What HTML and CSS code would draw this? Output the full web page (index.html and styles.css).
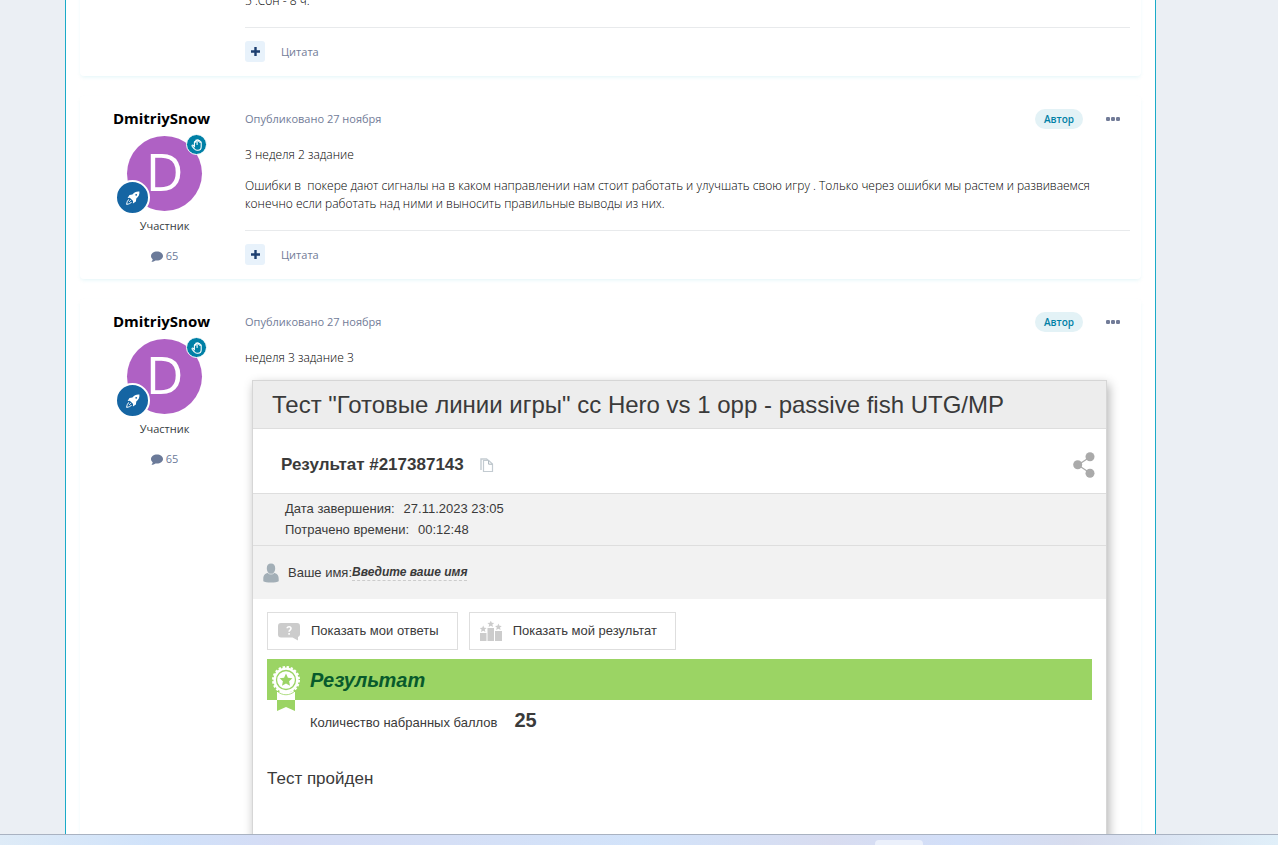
FILE: index.html
```html
<!DOCTYPE html>
<html lang="ru">
<head>
<meta charset="utf-8">
<title>Дневник</title>
<link rel="stylesheet" href="styles.css">
</head>
<body>
<svg class="sprite" aria-hidden="true">
  <symbol id="plus" viewBox="0 0 9 9"><path d="M3.3 0h2.4v3.3H9v2.4H5.7V9H3.3V5.7H0V3.3h3.3z" fill="currentColor"/></symbol>
  <symbol id="comment" viewBox="0 0 12 11"><path d="M6 .5c3.300 0 6 2 6 4.500s-2.700 4.500-6 4.500c-.5 0-1 0-1.500-.1C3.300 10.300 2 10.600.9 10.700c-.3 0-.4-.3-.2-.5.5-.5.9-1.100 1-2C.600 7.400 0 6.200 0 5 0 2.500 2.700.5 6 .5z" fill="currentColor"/></symbol>
  <symbol id="hand" viewBox="0 0 12 12"><path d="M3.400 7.800V3.200c0-1 1.300-1 1.300 0V1.900c0-1 1.400-1 1.400 0v-.4c0-1 1.400-1 1.400 0v.7c0-1 1.400-1 1.400 0v1.300c0-.9 1.300-.9 1.300.1v4.200c0 2-1.200 3.500-3.200 3.500H6c-1.200 0-2-.5-2.700-1.500L1.200 7.300c-.6-.9.400-1.700 1.200-1zM6.100 2v3.400" fill="none" stroke="#fff" stroke-width="1.100" stroke-linecap="round" stroke-linejoin="round"/></symbol>
  <symbol id="rocket" viewBox="0 0 14 14"><path d="M13.400.6c-3-.3-5.200.7-7 3L3.500 4 1.600 7l2.200-.2 3.300 3.300-.2 2.300 3-1.900.4-2.900c2.400-1.800 3.400-4 3.100-7z" fill="#fff"/><circle cx="10.200" cy="3.800" r=".9" fill="#1565a3"/><path d="M3 8.500C1.500 9.200 1 11 .6 13.400c2.400-.4 4.200-1 4.900-2.400M3.200 10.800l1.500-1.600" fill="none" stroke="#fff"/></symbol>
  <symbol id="dots" viewBox="0 0 14 4"><g fill="currentColor"><rect width="4" height="4" rx="1.200"/><rect x="5" width="4" height="4" rx="1.200"/><rect x="10" width="4" height="4" rx="1.200"/></g></symbol>
</svg>

<main class="viewport">
  <div class="page">
    <div class="feed">
      <article class="post">
        <div class="post-body">
          <div class="post-text"><p>5 .Сон - 8 ч.</p></div>
          <div class="post-controls">
            <button class="quote-add" aria-label="Мультицитата"><svg class="icon-plus"><use href="#plus"/></svg></button>
            <a class="quote" href="#">Цитата</a>
          </div>
        </div>
      </article>

      <article class="post">
        <aside class="author">
          <h3 class="author-name"><a href="#">DmitriySnow</a></h3>
          <div class="avatar"><span class="avatar-letter">D</span>
            <span class="badge-hand"><svg class="icon-hand"><use href="#hand"/></svg></span>
            <span class="badge-rank"><svg class="icon-rocket"><use href="#rocket"/></svg></span>
          </div>
          <p class="author-group">Участник</p>
          <a class="author-posts" href="#"><svg class="icon-comment"><use href="#comment"/></svg>65</a>
        </aside>
        <div class="post-body">
          <header class="post-head">
            <a class="post-date" href="#">Опубликовано 27 ноября</a>
            <span class="tag">Автор</span>
            <button class="more" aria-label="Ещё"><svg class="icon-dots"><use href="#dots"/></svg></button>
          </header>
          <div class="post-text">
            <p>3 неделя 2 задание</p>
            <p>Ошибки в&nbsp; покере дают сигналы на в каком направлении нам стоит работать и улучшать свою игру . Только через ошибки мы растем и развиваемся конечно если работать над ними и выносить правильные выводы из них.</p>
          </div>
          <div class="post-controls">
            <button class="quote-add" aria-label="Мультицитата"><svg class="icon-plus"><use href="#plus"/></svg></button>
            <a class="quote" href="#">Цитата</a>
          </div>
        </div>
      </article>

      <article class="post">
        <aside class="author">
          <h3 class="author-name"><a href="#">DmitriySnow</a></h3>
          <div class="avatar"><span class="avatar-letter">D</span>
            <span class="badge-hand"><svg class="icon-hand"><use href="#hand"/></svg></span>
            <span class="badge-rank"><svg class="icon-rocket"><use href="#rocket"/></svg></span>
          </div>
          <p class="author-group">Участник</p>
          <a class="author-posts" href="#"><svg class="icon-comment"><use href="#comment"/></svg>65</a>
        </aside>
        <div class="post-body">
          <header class="post-head">
            <a class="post-date" href="#">Опубликовано 27 ноября</a>
            <span class="tag">Автор</span>
            <button class="more" aria-label="Ещё"><svg class="icon-dots"><use href="#dots"/></svg></button>
          </header>
          <div class="post-text"><p>неделя 3 задание 3</p></div>
          <section class="quiz">
            <h2 class="quiz-title">Тест "Готовые линии игры" сс Hero vs 1 opp - passive fish UTG/MP</h2>
            <div class="quiz-result">
              <h3 class="quiz-number">Результат #217387143</h3>
              <button class="plain" aria-label="Копировать"><svg class="icon-copy" viewBox="0 0 14 15"><path d="M1 12V1h5.500l2 1.600" fill="none" stroke="#c3cbd1" stroke-width="1.400"/><path d="M3.500 2.500h5.300L12.500 6v7.500h-9z" fill="#fff" stroke="#c3cbd1" stroke-width="1.200"/><path d="M8.600 2.700v3.500h3.700" fill="none" stroke="#a9b4bb"/></svg></button>
              <button class="plain share" aria-label="Поделиться"><svg class="icon-share" viewBox="0 0 22 26"><path d="M17 5 5 13l12 8" fill="none" stroke="#aaa" stroke-width="1.200"/><g fill="#aaa"><circle cx="17" cy="4.800" r="4.500"/><circle cx="4.700" cy="12.800" r="4.500"/><circle cx="17" cy="21.200" r="4.500"/></g></svg></button>
            </div>
            <dl class="quiz-meta">
              <div class="meta-row"><dt>Дата завершения:</dt><dd>27.11.2023 23:05</dd></div>
              <div class="meta-row"><dt>Потрачено времени:</dt><dd>00:12:48</dd></div>
            </dl>
            <div class="quiz-user">
              <svg class="icon-user" viewBox="0 0 16 20"><path d="M8 .5c2.800 0 4.200 2 4.200 4.700 0 2-.7 3.500-1.700 4.600 3.700.6 5.200 2.400 5.200 6v2.400c-2 1.800-13.400 1.800-15.400 0v-2.400c0-3.600 1.500-5.400 5.200-6-1-1.100-1.700-2.600-1.700-4.600C3.800 2.500 5.200.5 8 .5z" fill="#a3afb7"/><path d="M4.800 10c2 1.500 4.400 1.500 6.400 0" fill="none" stroke="#dfe3e5" stroke-width=".8"/></svg>
              <span>Ваше имя:</span><a class="user-edit" href="#">Введите ваше имя</a>
            </div>
            <div class="quiz-main">
              <div class="quiz-actions">
                <button class="quiz-button"><svg class="icon-answers" viewBox="0 0 22 19"><path d="M3 1h16a3 3 0 0 1 3 3v8a3 3 0 0 1-2 3v3.500L14.500 15.500H3a3 3 0 0 1-3-3V4a3 3 0 0 1 3-3z" fill="#ccc"/><path d="M9.200 6.300c0-2.200 3.800-2 3.800.2 0 1.600-1.900 1.500-1.900 3.200M11.100 11v1.700" fill="none" stroke="#fff" stroke-width="1.600"/></svg>Показать мои ответы</button>
                <button class="quiz-button"><svg class="icon-podium" viewBox="0 0 22 20"><g fill="#ccc"><path d="M0 12h6.500v8H0zM7.500 7h6.500v13H7.500zM15 10h7v10h-7z"/><path id="star" d="M10.800-.4l1 2.200 2.400.2-1.800 1.600.6 2.400-2.200-1.300L8.600 6l.6-2.400L7.400 2l2.400-.2z"/><use href="#star" x="-7.600" y="5"/><use href="#star" x="7.600" y="3"/></g></svg>Показать мой результат</button>
              </div>
              <div class="score-banner">
                <svg class="icon-medal" viewBox="0 0 28 45"><path d="M5 26h18v8H5z" fill="#fff"/><path d="M5 34h18v11l-9-4-9 4z" fill="#9bd464"/><circle cx="14" cy="14" r="12.600" fill="#fff"/><circle cx="14" cy="14" r="13" fill="none" stroke="#fff" stroke-width="2" stroke-dasharray="2.400 1.700"/><path d="M5 25c5 5 13 5 18 0" fill="none" stroke="#9bd464" stroke-width=".8"/><circle cx="14" cy="14" r="9.500" fill="none" stroke="#9bd464" stroke-width="1.300"/><path d="M14 7.500l1.900 4.200 4.500.5-3.300 3.100.9 4.500-4-2.300-4 2.300.9-4.500-3.300-3.100 4.500-.5z" fill="#9bd464"/></svg>
                <h3 class="score-title">Результат</h3>
              </div>
              <p class="score">Количество набранных баллов <strong class="score-value">25</strong></p>
              <p class="passed">Тест пройден</p>
            </div>
          </section>
        </div>
      </article>
    </div>
  </div>
</main>
<footer class="taskbar"><span class="task-tab"></span></footer>
</body>
</html>
```
FILE: styles.css
```css
* { box-sizing: border-box; }
body {
  margin: 0;
  height: 100vh;
  display: flex;
  flex-direction: column;
  overflow: hidden;
  background: #ebeff4;
  color: #353c41;
  font: 12px/18px "Open Sans", "Noto Sans", sans-serif;
}
h2, h3, p, dl, dd { margin: 0; }
a { color: inherit; text-decoration: none; }
button { border: 0; padding: 0; background: none; font: inherit; color: inherit; cursor: pointer; }
svg { display: block; flex: none; }
.sprite { display: none; }

.viewport { flex: 1; min-height: 0; overflow: hidden; display: flex; }
.page {
  flex: 1;
  margin: 0 122px 0 65px;
  padding: 0 14px;
  background: #fff;
  border: solid #1aabc8;
  border-width: 0 1px;
}
.feed { display: flex; flex-direction: column; gap: 20px; margin-top: -37px; }
.post {
  display: flex;
  border-radius: 4px;
  padding: 12px 11px 0 0;
  box-shadow: 0 2px 4px -1px rgba(0, 170, 200, .12);
}

.author {
  width: 165px;
  padding-left: 4px;
  display: flex;
  flex-direction: column;
  align-items: center;
}
.author-name { font-size: 15px; line-height: 20px; font-weight: 700; color: #000; padding-right: 6px; }
.avatar {
  position: relative;
  width: 75px;
  height: 75px;
  margin-top: 8px;
  border-radius: 50%;
  background: #af61c4;
  color: #fff;
  text-align: center;
}
.avatar-letter { display: block; font-size: 52px; line-height: 70px; }
.badge-hand, .badge-rank {
  position: absolute;
  display: flex;
  align-items: center;
  justify-content: center;
  border: 1px solid #fff;
  border-radius: 50%;
}
.badge-hand { top: -2px; right: -5px; width: 21px; height: 21px; background: #0080a6; }
.badge-rank { left: -12px; bottom: -4px; width: 35px; height: 35px; border-width: 2px; background: #1565a3; }
.icon-hand { width: 12px; height: 12px; }
.icon-rocket { width: 14px; height: 14px; }
.author-group { margin-top: 6px; font-size: 11px; }
.author-posts { display: flex; align-items: center; gap: 3px; margin-top: 12px; font-size: 11px; color: #6b7a99; }
.icon-comment { width: 12px; height: 11px; }

.post-body { flex: 1; min-width: 0; }
.post:first-child .post-body { margin-left: 165px; }
.post-head { display: flex; align-items: center; height: 21px; color: #727c98; font-size: 11px; }
.tag {
  margin-left: auto;
  padding: 1px 9px;
  border-radius: 10px;
  background: #e3f2f6;
  color: #0080a6;
  font-size: 10px;
  font-weight: 600;
}
.more { margin: 0 10px 0 23px; }
.icon-dots { width: 14px; height: 4px; }
.post-text { display: flex; flex-direction: column; gap: 13px; padding: 17px 0 17px; font-weight: 300; color: #000; }
.post-controls {
  display: flex;
  align-items: center;
  gap: 16px;
  padding: 13px 0 14px;
  border-top: 1px solid #e8eaec;
}
.quote-add {
  display: flex;
  align-items: center;
  justify-content: center;
  width: 20px;
  height: 21px;
  border-radius: 3px;
  background: #e8f2fb;
  color: #1d3f70;
}
.icon-plus { width: 9px; height: 9px; }
.quote { font-size: 11px; color: #727c98; }

.quiz {
  margin: -4px 23px 0 7px;
  height: 600px;
  border: 1px solid #d6d6d6;
  background: #fff;
  box-shadow: 2px 4px 10px rgba(0, 0, 0, .3);
  color: #3a3a3a;
  font: 13px/20px "Liberation Sans", Arial, sans-serif;
}
.quiz-title {
  padding: 0 19px;
  font-size: 24px;
  line-height: 47px;
  font-weight: 400;
  background: #ededed;
  border-bottom: 1px solid #dedede;
}
.quiz-result { display: flex; align-items: center; gap: 16px; height: 65px; padding: 8px 11px 0 28px; border-bottom: 1px solid #dedede; }
.quiz-number { font-size: 17px; }
.share { margin-left: auto; }
.icon-copy { width: 14px; height: 15px; }
.icon-share { width: 22px; height: 26px; }
.quiz-meta { padding: 5px 32px; background: #f2f2f2; border-bottom: 1px solid #dedede; }
.meta-row { display: flex; gap: 9px; }
.meta-row + .meta-row { margin-top: 1px; }
.quiz-user { display: flex; align-items: center; height: 53px; padding: 0 10px; background: #f2f2f2; }
.icon-user { width: 16px; height: 20px; margin-right: 9px; }
.user-edit { font-size: 12px; line-height: 15px; font-weight: 700; font-style: italic; border-bottom: 1px dashed #ccc; }
.quiz-main { padding: 13px 14px; }
.quiz-actions { display: flex; gap: 11px; }
.quiz-button { display: flex; align-items: center; gap: 11px; height: 38px; padding: 0 18px 0 10px; border: 1px solid #dedede; }
.icon-answers { width: 22px; height: 19px; }
.icon-podium { width: 22px; height: 20px; }
.score-banner { display: flex; gap: 10px; height: 41px; margin-top: 9px; padding: 7px 5px 0; background: #9bd464; }
.icon-medal { width: 28px; height: 45px; }
.score-title { font-size: 20px; line-height: 28px; font-style: italic; color: #085a2c; }
.score { display: flex; align-items: baseline; gap: 17px; margin-top: 8px; padding-left: 43px; line-height: 24px; }
.score-value { font-size: 20px; }
.passed { margin-top: 32px; font-size: 17px; line-height: 24px; }

.taskbar {
  height: 11px;
  border-top: 1px solid #a9b2c1;
  background: linear-gradient(90deg, #deebf7, #d0e2fa 12%, #d5dcf5 22%, #d5dff6 35%, #d2e3fa 50%, #d8dcf0 65%, #d2dff9 75%, #d7dcee 84%, #e0eff9);
}
.task-tab { display: block; width: 48px; height: 5px; margin: 5px 0 0 875px; border-radius: 4px 4px 0 0; background: #ebf0fb; }
```
